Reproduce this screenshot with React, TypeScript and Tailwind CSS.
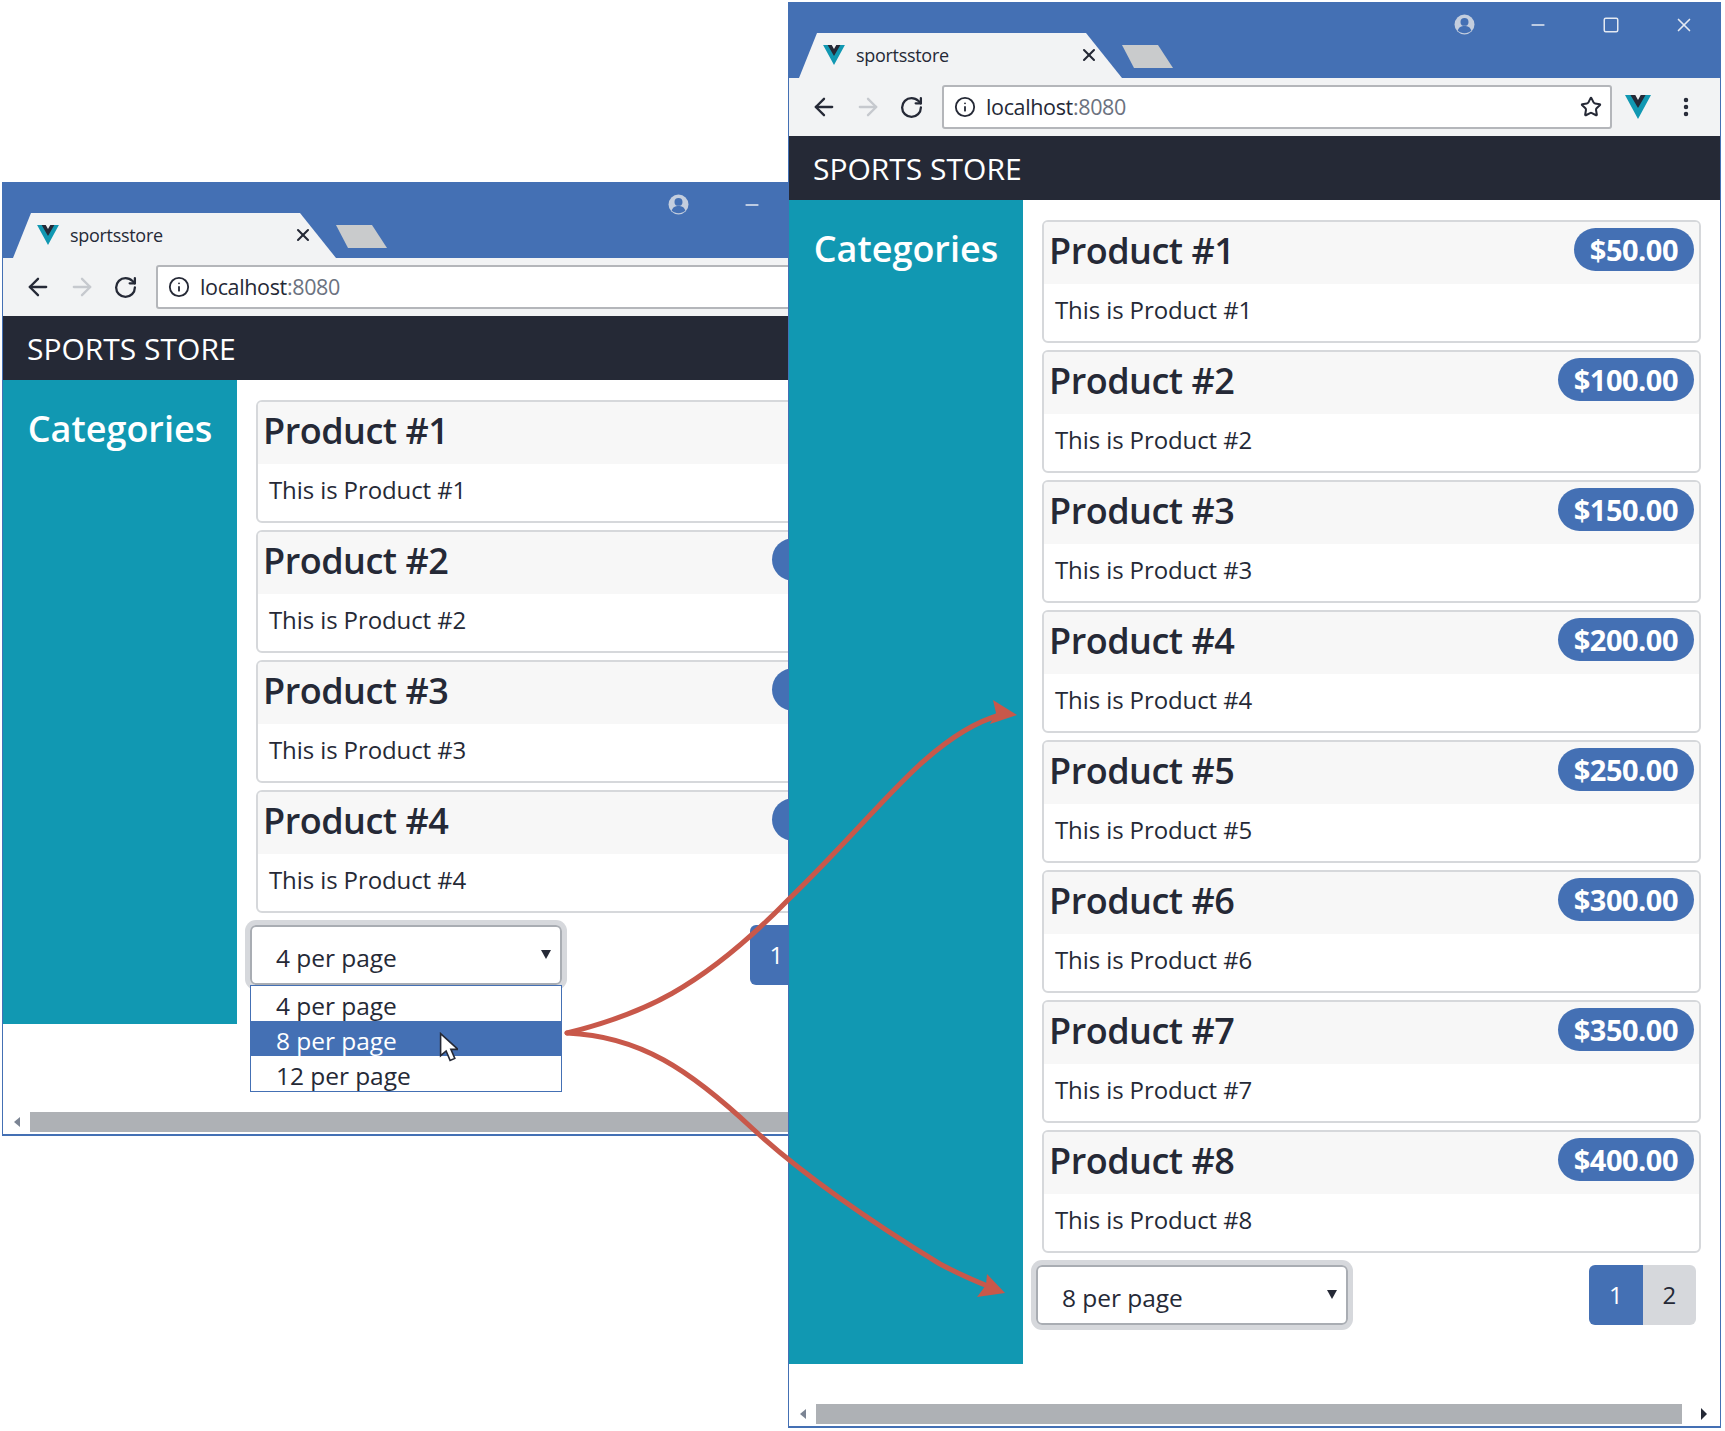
import { ArrowLeft, ArrowRight, Info, Minus, MoreVertical, RotateCw, Square, Star, X } from "lucide-react";

const prices = ["$50.00", "$100.00", "$150.00", "$200.00", "$250.00", "$300.00", "$350.00", "$400.00"];

function VueLogo({ className }: { className?: string }) {
  return (
    <svg viewBox="0 0 24 22" className={className}>
      <path d="M0 0h7l5 8 5-8h7L12 22z" fill="#1198b2" />
      <path d="M5 0h4.500L12 4.500 14.500 0H19l-7 12z" fill="#252936" />
    </svg>
  );
}

function UserIcon() {
  return (
    <svg viewBox="0 0 20 20" className="h-[21px] w-[21px]">
      <circle cx="10" cy="10" r="9.500" fill="#c4cede" />
      <circle cx="10" cy="7.500" r="3.800" fill="#4470b4" />
      <path d="M3.500 16c1-3.500 3.500-4.500 6.500-4.500s5.500 1 6.500 4.500c-3.500 3-9.500 3-13 0z" fill="#4470b4" />
    </svg>
  );
}

function ProductCard({ n, price }: { n: number; price: string }) {
  return (
    <div className="mb-[7px] h-[123px] overflow-hidden rounded-md border-2 border-[#d6d8db]">
      <div className="flex h-[62px] items-start justify-between bg-[#f7f7f7] pl-[5px] pr-[5px] pt-[6px]">
        <div className="text-[36px] font-semibold leading-[46px] tracking-[-0.5px]">Product #{n}</div>
        <div className="flex h-[43px] items-center rounded-full bg-[#4470b4] px-[16px] text-[29px] font-bold tracking-[-0.5px] text-white">{price}</div>
      </div>
      <div className="pl-[11px] pt-[9px] text-[24px] leading-[34px] tracking-[-0.1px]">This is Product #{n}</div>
    </div>
  );
}

function BrowserWindow({ count, perPage, pages, className, children }: { count: number; perPage: string; pages: number[]; className: string; children?: React.ReactNode }) {
  return (
    <div className={`absolute flex w-[933px] flex-col overflow-hidden border-x border-b-2 border-[#4470b4] bg-white text-[#252936] ${className}`}>
      <div className="relative h-[76px] shrink-0 bg-[#4470b4]">
        <div className="absolute bottom-0 left-[10px] h-[45px] w-[323px] bg-[#f2f3f4] [clip-path:polygon(0_100%,18px_0,287px_0,100%_100%)]" />
        <VueLogo className="absolute left-[34px] top-[43px] h-[20px] w-[22px]" />
        <div className="absolute left-[67px] top-[39px] text-[18px] leading-[28px] tracking-[-0.3px]">sportsstore</div>
        <X className="absolute left-[290px] top-[43px] h-5 w-5" strokeWidth={2.500} />
        <div className="absolute left-[333px] top-[43px] h-[23px] w-[51px] bg-[#c9cbcc] [clip-path:polygon(0_0,36px_0,100%_100%,12px_100%)]" />
        <div className="absolute left-[665px] top-[12px]"><UserIcon /></div>
        <Minus className="absolute left-[739px] top-[13px] h-[20px] w-[20px] text-[#e4e9f2]" strokeWidth={2} />
        <Square className="absolute left-[813px] top-[14px] h-[18px] w-[18px] text-[#e4e9f2]" strokeWidth={2} />
        <X className="absolute left-[884px] top-[12px] h-[22px] w-[22px] text-[#e4e9f2]" strokeWidth={1.800} />
      </div>
      <div className="flex h-[58px] shrink-0 items-center bg-[#f2f3f4] pl-[21px]">
        <ArrowLeft className="h-[28px] w-[28px]" strokeWidth={2} />
        <ArrowRight className="ml-[16px] h-[28px] w-[28px] text-[#c6c9ce]" strokeWidth={2} />
        <RotateCw className="ml-[17px] h-[25px] w-[25px]" strokeWidth={2.200} />
        <div className="ml-[18px] flex h-[44px] w-[670px] items-center rounded-[3px] border-2 border-[#b4b6ba] bg-white pl-[10px] pr-[8px]">
          <Info className="h-[22px] w-[22px]" strokeWidth={2} />
          <div className="ml-[10px] text-[21.500px] tracking-[-0.35px]">localhost<span className="text-[#6b7280]">:8080</span></div>
          <Star className="ml-auto h-[22px] w-[22px]" strokeWidth={2.200} />
        </div>
        <VueLogo className="ml-[13px] h-[24px] w-[26px]" />
        <MoreVertical className="ml-[23px] h-[24px] w-[24px]" strokeWidth={2.500} />
      </div>
      <div className="flex h-[64px] shrink-0 items-center bg-[#252936] pl-[24px] pt-[1px] text-[30px] text-white">SPORTS STORE</div>
      <div className="flex shrink-0">
        <div className="w-[234px] shrink-0 bg-[#1198b2] pt-[22px] text-center text-[36px] font-semibold leading-[54px] text-white">Categories</div>
        <div className="w-[678px] pb-[39px] pl-[19px] pt-[20px]">
          {prices.slice(0, count).map((price, i) => (
            <ProductCard key={price} n={i + 1} price={price} />
          ))}
          <div className="mt-[12px] flex h-[60px] items-start justify-between pr-[5px]">
            <div className="relative -ml-[6px] flex h-[60px] w-[312px] items-center rounded-md border-2 border-[#a9adb3] pl-[24px] pt-[6px] text-[24.500px] tracking-[-0.05px] shadow-[0_0_0_5px_#d6d8dc]">
              {perPage}
              <div className="absolute right-[9px] top-[23px] h-0 w-0 border-x-[5px] border-t-[9px] border-x-transparent border-t-[#252936]" />
              {children}
            </div>
            <div className="flex h-[60px] text-[24px]">
              {pages.map((p) => (
                <div key={p} className={`flex w-[53.500px] items-center justify-center first:rounded-l-md last:rounded-r-md ${p === 1 ? "bg-[#4470b4] text-white" : "bg-[#d6d8dc]"}`}>{p}</div>
              ))}
            </div>
          </div>
        </div>
      </div>
      <div className="mt-auto flex h-[24px] shrink-0 items-center">
        <div className="ml-[11px] h-0 w-0 border-y-[5px] border-r-[6px] border-y-transparent border-r-[#7c8594]" />
        <div className="ml-[10px] h-[20px] w-[866px] bg-[#aeb1b5]" />
        <div className="ml-[19px] h-0 w-0 border-y-[6px] border-l-[6px] border-y-transparent border-l-[#252936]" />
      </div>
    </div>
  );
}

function Dropdown() {
  return (
    <div className="absolute -left-[2px] top-[58px] z-10 w-[312px] border border-[#4470b4] bg-white text-[24.500px] leading-[35px] tracking-[-0.05px]">
      <div className="h-[35px] pl-[25px] pt-[2px]">4 per page</div>
      <div className="h-[35px] bg-[#4470b4] pl-[25px] pt-[2px] text-white">8 per page</div>
      <div className="h-[35px] pl-[25px] pt-[2px]">12 per page</div>
      <svg viewBox="0 0 12 19" className="absolute left-[188px] top-[46px] h-[30px] w-[19px]">
        <path d="M1 1v14l3.500-3 2.500 6 3-1.300-2.500-5.700H12z" fill="#fff" stroke="#252936" strokeWidth="1" />
      </svg>
    </div>
  );
}

export default function App() {
  return (
    <div className="relative h-[1431px] w-[1725px] overflow-hidden bg-white font-['Open_Sans',sans-serif]">
      <BrowserWindow count={4} perPage="4 per page" pages={[1, 2, 3]} className="left-[2px] top-[182px] h-[954px]">
        <Dropdown />
      </BrowserWindow>
      <BrowserWindow count={8} perPage="8 per page" pages={[1, 2]} className="left-[788px] top-[2px] h-[1426px]" />
      <svg viewBox="0 0 1725 1431" className="pointer-events-none absolute inset-0 h-[1431px] w-[1725px]">
        <path d="M567 1033 C640 1015 700 990 788 900 C850 840 890 790 925 760 C950 738 975 722 1000 715" fill="none" stroke="#c8584a" strokeWidth="5" strokeLinecap="round" />
        <path d="M1017 715 L993 700 L996 713 L990 724z" fill="#c8584a" />
        <path d="M567 1033 C640 1036 690 1070 753 1129 C800 1172 860 1215 940 1264 C955 1272 970 1279 990 1287" fill="none" stroke="#c8584a" strokeWidth="5" strokeLinecap="round" />
        <path d="M1005 1293 L987 1274 L986 1285 L977 1297z" fill="#c8584a" />
      </svg>
    </div>
  );
}
